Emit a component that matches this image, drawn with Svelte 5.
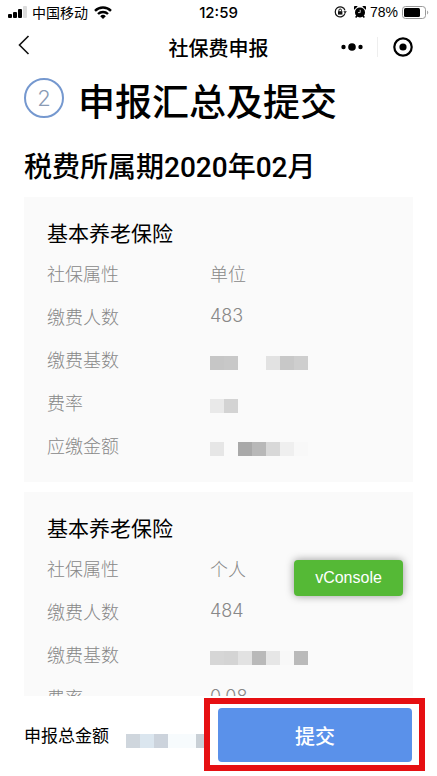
<script lang="ts">
  type Row = { label: string; text?: string; blocks?: string[] };
  type Card = { title: string; rows: Row[] };

  const cards: Card[] = [
    {
      title: "基本养老保险",
      rows: [
        { label: "社保属性", text: "单位" },
        { label: "缴费人数", text: "483" },
        {
          label: "缴费基数",
          blocks: ["#c6c6c6", "#c8c8c8", "#fafafa", "#fafafa", "#e2e2e2", "#c8c8c8", "#cecece"],
        },
        { label: "费率", blocks: ["#e9e9e9", "#d3d3d3"] },
        {
          label: "应缴金额",
          blocks: ["#e6e6e6", "#fafafa", "#a9a9a9", "#b8b8b8", "#d8d8d8", "#efefef", "#f8f8f8"],
        },
      ],
    },
    {
      title: "基本养老保险",
      rows: [
        { label: "社保属性", text: "个人" },
        { label: "缴费人数", text: "484" },
        {
          label: "缴费基数",
          blocks: ["#d6d6d6", "#d4d4d4", "#e2e2e2", "#b9b9b9", "#e6e6e6", "#f8f8f8", "#bababa"],
        },
        { label: "费率", text: "0.08" },
      ],
    },
  ];

  const totalBlocks = ["#cfd6dd", "#dbe6ef", "#ccd3dc", "#f7fbfd", "#f7fbfd", "#c9d0d6"];
</script>

{#snippet mosaic(blocks: string[])}
  <span class="mosaic">
    {#each blocks as color}
      <i style="background: {color}"></i>
    {/each}
  </span>
{/snippet}

<div class="page">
  <div class="status">
    <div class="side">
      <svg width="20" height="12" viewBox="0 0 20 12">
        <rect x="0" y="8" width="4" height="4" rx="1" />
        <rect x="5" y="6" width="4" height="6" rx="1" />
        <rect x="10" y="3" width="4" height="9" rx="1" />
        <rect x="15" y="0" width="4" height="12" rx="1" fill="#dcdcdc" />
      </svg>
      <span class="carrier">中国移动</span>
      <svg width="18" height="13" viewBox="0 0 18 13" fill="none" stroke="#000" stroke-width="2.4">
        <path d="M1 4.8a11.4 11.4 0 0 1 16 0" />
        <path d="M4 8a7.2 7.2 0 0 1 10 0" />
        <path d="M9 13 6.2 10.2a4 4 0 0 1 5.6 0z" fill="#000" stroke="none" />
      </svg>
    </div>
    <span class="time">12:59</span>
    <div class="side right">
      <svg width="13" height="12" viewBox="0 0 13 12" fill="none" stroke="#111">
        <path d="M11 7.4A5 5 0 1 1 11 4.4" stroke-width="1.2" />
        <path d="M9.4 5.2h3.4L11.1 7.6z" fill="#111" stroke="none" />
        <rect x="4" y="5.2" width="4.4" height="3.4" fill="#111" stroke="none" />
        <path d="M4.9 5.4V4.3a1.3 1.3 0 0 1 2.6 0v1.1" />
      </svg>
      <svg class="alarm" width="12" height="12" viewBox="0 0 12 12">
        <circle cx="6" cy="6.4" r="5" />
        <path d="M.2 3.8A2.2 2.2 0 0 1 3.6.4zM11.8 3.8A2.2 2.2 0 0 0 8.4.4zM2.4 9.2l1.4 1L2.2 12l-1.1-.9zM9.6 9.2l-1.4 1L9.8 12l1.1-.9z" />
        <path d="M6.2 3.8v2.8H4" fill="none" stroke="#fff" stroke-width=".8" />
      </svg>
      <span class="percent">78%</span>
      <svg width="27" height="13" viewBox="0 0 27 13">
        <rect x=".5" y=".5" width="23" height="12" rx="3" fill="none" stroke="#999" />
        <rect x="2" y="2" width="16" height="9" rx="1.5" />
        <path d="M25 4.5a2.2 2.2 0 0 1 0 4z" fill="#aaa" />
      </svg>
    </div>
  </div>

  <header class="nav">
    <div class="left">
      <button aria-label="返回">
        <svg width="12" height="20" viewBox="0 0 12 20" fill="none" stroke="#111" stroke-width="1.6">
          <path d="M10.5 1 1.5 10l9 9" />
        </svg>
      </button>
    </div>
    <h1>社保费申报</h1>
    <div class="capsule">
      <button aria-label="更多">
        <svg width="22" height="8" viewBox="0 0 22 8">
          <circle cx="2.5" cy="4" r="2.2" />
          <circle cx="11" cy="4" r="3.8" />
          <circle cx="19.5" cy="4" r="2.2" />
        </svg>
      </button>
      <button aria-label="关闭">
        <svg width="20" height="20" viewBox="0 0 20 20">
          <circle cx="10" cy="10" r="8.7" fill="none" stroke="#000" stroke-width="2.2" />
          <circle cx="10" cy="10" r="3.6" />
        </svg>
      </button>
    </div>
  </header>

  <main>
    <div class="step">
      <span class="num">2</span>
      <h2>申报汇总及提交</h2>
    </div>
    <h3>税费所属期2020年02月</h3>
    {#each cards as card}
      <section class="card">
        <h4>{card.title}</h4>
        <dl>
          {#each card.rows as row}
            <div class="row">
              <dt>{row.label}</dt>
              <dd>
                {#if row.blocks}
                  {@render mosaic(row.blocks)}
                {:else}
                  {row.text}
                {/if}
              </dd>
            </div>
          {/each}
        </dl>
      </section>
    {/each}
  </main>

  <footer>
    <span class="total">申报总金额</span>
    <div class="amount">{@render mosaic(totalBlocks)}</div>
    <div class="action">
      <button class="submit">提交</button>
      <div class="ring"></div>
    </div>
  </footer>

  <button class="vconsole">vConsole</button>
</div>

<style>
  :global(body) {
    margin: 0;
    background: #fff;
  }
  .page {
    position: relative;
    display: flex;
    flex-direction: column;
    height: 100vh;
    overflow: hidden;
    color: #000;
    font-family: "Inter", "Noto Sans CJK SC", sans-serif;
  }
  button {
    padding: 0;
    border: 0;
    background: none;
    font: inherit;
    cursor: pointer;
  }
  svg { display: block; }
  h1, h2, h3, h4, dl, dd { margin: 0; }

  .status {
    display: flex;
    align-items: center;
    height: 24px;
    padding: 0 8px;
    font-size: 14px;
  }
  .side {
    flex: 1;
    display: flex;
    align-items: center;
    gap: 4px;
  }
  .right { justify-content: flex-end; }
  .alarm { margin-left: 3px; }
  .carrier { margin-right: 2px; }
  .time {
    font-size: 15px;
    font-weight: 500;
  }
  .percent { font-family: "Liberation Sans", sans-serif; }

  .nav {
    display: flex;
    align-items: center;
    height: 46px;
    padding: 0 10px;
  }
  .left {
    flex: 1;
  }
  .left button { margin-left: 8px; }
  h1 {
    font-size: 20px;
    font-weight: 500;
  }
  .capsule {
    flex: 1;
    display: flex;
    justify-content: flex-end;
  }
  .capsule button {
    display: flex;
    align-items: center;
    justify-content: center;
    width: 50px;
    height: 20px;
  }
  .capsule button + button { border-left: 1px solid #eee; }

  main {
    flex: 1;
    min-height: 0;
    overflow: hidden;
    padding: 0 24px;
  }
  .step {
    display: flex;
    align-items: flex-start;
    gap: 14px;
    padding-top: 8px;
  }
  .num {
    box-sizing: border-box;
    width: 40px;
    height: 40px;
    border: 2px solid #7598cf;
    border-radius: 50%;
    color: #8a9bb5;
    font-size: 22px;
    font-weight: 300;
    line-height: 36px;
    text-align: center;
  }
  h2 {
    font-size: 37px;
    font-weight: 500;
    line-height: 50px;
  }
  h3 {
    margin: 20px 0 9px;
    font-family: "Roboto", "Noto Sans CJK SC", sans-serif;
    font-size: 28px;
    font-weight: 500;
    line-height: 40px;
  }
  .card {
    margin-bottom: 10px;
    padding: 21px 23px 16px;
    background: #fafafa;
  }
  h4 {
    margin-bottom: 1px;
    font-size: 21px;
    font-weight: 400;
    line-height: 32px;
  }
  .row {
    display: flex;
    align-items: center;
    height: 43px;
    color: #888;
    font-size: 18px;
    font-weight: 300;
  }
  dt { width: 163px; }
  .mosaic {
    display: flex;
    padding-top: 8px;
  }
  .mosaic i {
    width: 14px;
    height: 14px;
  }

  footer {
    box-sizing: border-box;
    display: flex;
    align-items: center;
    height: 80px;
    padding: 0 25px 2px 24px;
    font-size: 17px;
  }
  .total {
    padding-bottom: 2px;
    white-space: nowrap;
  }
  .amount {
    flex: 1;
    min-width: 0;
    padding: 4px 0 0 17px;
  }
  .action {
    position: relative;
    width: 50%;
  }
  .submit {
    display: block;
    width: 100%;
    height: 54px;
    border-radius: 4px;
    background: #5a91ea;
    color: #fff;
    font-size: 20px;
    font-weight: 500;
  }
  .ring {
    position: absolute;
    inset: -10px -13px -9px -14px;
    border: 6px solid #e60f12;
    pointer-events: none;
  }

  .vconsole {
    position: absolute;
    right: 34px;
    bottom: 180px;
    width: 109px;
    height: 36px;
    border-radius: 4px;
    background: #55b936;
    box-shadow: 0 0 8px rgba(0, 0, 0, 0.4);
    color: #fff;
    font-family: "Liberation Sans", sans-serif;
    font-size: 16px;
  }
</style>
